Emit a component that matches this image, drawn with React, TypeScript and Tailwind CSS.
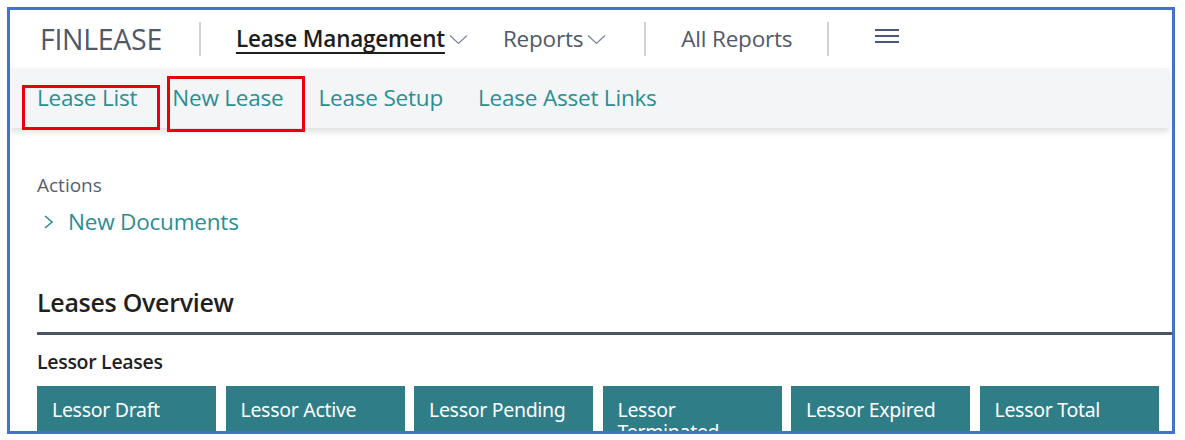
import React from "react";

const font = { fontFamily: '"Open Sans", "Noto Sans", Arial, sans-serif' };

function Chevron() {
  return (
    <svg width="19" height="12" viewBox="0 0 19 12" className="ml-[4px] mt-[2px]">
      <path d="M1 1.5 L9.5 9.5 L18 1.5" fill="none" stroke="#7a8494" strokeWidth="1.2" />
    </svg>
  );
}

const tiles = ["Lessor Draft", "Lessor Active", "Lessor Pending", "Lessor Terminated", "Lessor Expired", "Lessor Total"];

export default function App() {
  return (
    <div className="w-[1185px] h-[440px] bg-white relative" style={font}>
      <div className="absolute left-[7px] top-[7px] w-[1168px] h-[427px] border-[3px] border-[#4472c4] overflow-hidden bg-white">
        {/* header */}
        <div className="h-[58px] flex items-center text-[#505c6d]">
          <div className="ml-[30px] text-[28.5px] tracking-[-0.3px] text-[#4f5968] font-normal">FINLEASE</div>
          <div className="ml-[37px] w-[2px] h-[34px] bg-[#cfd2d6]" />
          <div className="ml-[35px] flex items-center">
            <span className="text-[22.5px] font-semibold text-[#1d1d1d] underline decoration-[2px] underline-offset-[5px] tracking-[-0.2px]">Lease Management</span>
            <Chevron />
          </div>
          <div className="ml-[35px] flex items-center">
            <span className="text-[22.5px] text-[#4f5968] tracking-[-0.2px]">Reports</span>
            <Chevron />
          </div>
          <div className="ml-[38px] w-[2px] h-[34px] bg-[#cfd2d6]" />
          <span className="ml-[35px] text-[22.5px] text-[#4f5968] tracking-[-0.2px]">All Reports</span>
          <div className="ml-[35px] w-[2px] h-[34px] bg-[#cfd2d6]" />
          <div className="ml-[46px] flex flex-col gap-[4px] mt-[-6px]">
            <div className="w-[24px] h-[2px] bg-[#4a5880]" />
            <div className="w-[24px] h-[2px] bg-[#4a5880]" />
            <div className="w-[24px] h-[2px] bg-[#4a5880]" />
          </div>
        </div>
        {/* subnav */}
        <div className="h-[60px] bg-[#f4f5f7] mr-[3px] flex items-center pl-[27px] gap-[35px] text-[22.5px] text-[#2a8e94] tracking-[-0.2px] shadow-[0_4px_6px_rgba(0,0,0,0.12)] relative">
          <span>Lease List</span>
          <span>New Lease</span>
          <span>Lease Setup</span>
          <span>Lease Asset Links</span>
        </div>
        {/* body */}
        <div className="pl-[27px]">
          <div className="mt-[45px] text-[19px] text-[#555f6e] leading-[24px]">Actions</div>
          <div className="mt-[13px] flex items-center leading-[24px]">
            <svg width="12" height="14" viewBox="0 0 12 14" className="ml-[6px]">
              <path d="M2 1 L9 7 L2 13" fill="none" stroke="#2a8e94" strokeWidth="1.6" />
            </svg>
            <span className="ml-[13px] text-[22.5px] text-[#2a8e94] tracking-[-0.2px]">New Documents</span>
          </div>
          <div className="mt-[52px] text-[25px] font-semibold text-[#1f1f1f] leading-[32px] tracking-[-0.3px]">Leases Overview</div>
          <div className="mt-[14px] h-[3px] bg-[#4a5464]" />
          <div className="mt-[15px] text-[19.5px] font-semibold text-[#1f1f1f] leading-[24px] tracking-[-0.3px]">Lessor Leases</div>
          <div className="mt-[12px] flex gap-[9.5px]">
            {tiles.map((t) => (
              <div key={t} className="w-[179px] h-[80px] bg-[#2e7d87] text-white text-[19.5px] leading-[22px] pt-[13px] pl-[15px] pr-[8px] tracking-[-0.3px]" style={{ fontFamily: '"Noto Sans", "Open Sans", sans-serif' }}>
                {t}
              </div>
            ))}
          </div>
        </div>
      </div>
      {/* red highlight boxes */}
      <div className="absolute left-[22px] top-[85px] w-[138px] h-[45px] border-[3px] border-[#e8000b]" />
      <div className="absolute left-[167px] top-[76px] w-[138px] h-[56px] border-[3px] border-[#e8000b]" />
    </div>
  );
}
